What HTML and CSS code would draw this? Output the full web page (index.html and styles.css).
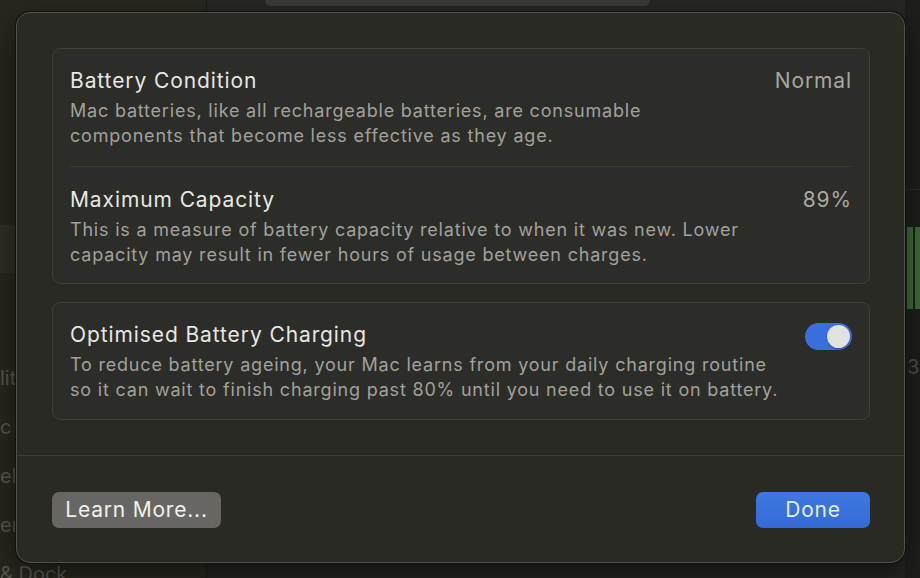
FILE: index.html
```html
<!DOCTYPE html>
<html lang="en">
<head>
<meta charset="utf-8">
<title>Battery Health</title>
<link rel="stylesheet" href="styles.css">
</head>
<body>
<div class="app">
  <aside class="sidebar">
    <div class="side-top"></div>
    <div class="side-sel"></div>
    <div class="side-list">
      <div class="side-item">lit</div>
      <div class="side-item">c</div>
      <div class="side-item">ell</div>
      <div class="side-item">er</div>
      <div class="side-item">&amp; Dock</div>
    </div>
  </aside>
  <main class="main">
    <div class="topbar"><div class="search"></div></div>
    <div class="pane"></div>
  </main>
  <div class="rightstrip">
    <div class="rs-line"></div>
    <div class="bars"><span class="bar"></span><span class="bar"></span></div>
    <div class="rs-num">3</div>
  </div>
</div>

<div class="dialog">
  <div class="content">
    <section class="card">
      <div class="row row1">
        <div class="row-text">
          <div class="title">Battery Condition</div>
          <div class="desc">Mac batteries, like all rechargeable batteries, are consumable<br>components that become less effective as they age.</div>
        </div>
        <div class="value">Normal</div>
      </div>
      <div class="divider"></div>
      <div class="row row2">
        <div class="row-text">
          <div class="title">Maximum Capacity</div>
          <div class="desc">This is a measure of battery capacity relative to when it was new. Lower<br>capacity may result in fewer hours of usage between charges.</div>
        </div>
        <div class="value">89%</div>
      </div>
    </section>
    <section class="card card2">
      <div class="row row3">
        <div class="row-text">
          <div class="title">Optimised Battery Charging</div>
          <div class="desc">To reduce battery ageing, your Mac learns from your daily charging routine<br>so it can wait to finish charging past 80% until you need to use it on battery.</div>
        </div>
        <div class="toggle"><span class="knob"></span></div>
      </div>
    </section>
  </div>
  <div class="footer">
    <button class="btn btn-secondary">Learn More...</button>
    <button class="btn btn-primary">Done</button>
  </div>
</div>
</body>
</html>
```
FILE: styles.css
```css
* { box-sizing: border-box; }
html, body {
  margin: 0;
  width: 920px;
  height: 578px;
  overflow: hidden;
  background: #1d1d1b;
  font-family: "Inter", "Noto Sans", "Liberation Sans", sans-serif;
}
.app {
  display: flex;
  width: 920px;
  height: 578px;
}
.sidebar {
  width: 207px;
  flex-shrink: 0;
  background: #28261e;
  display: flex;
  flex-direction: column;
  border-right: 1px solid #1a1a18;
  overflow: hidden;
}
.side-top { height: 225px; flex-shrink: 0; }
.side-sel { height: 48px; flex-shrink: 0; background: #302d24; }
.side-list {
  flex-shrink: 0;
  display: flex;
  flex-direction: column;
  padding-top: 107px;
}
.side-item {
  flex-shrink: 0;
  height: 49px;
  margin-top: -14px;
  margin-bottom: 14px;
  color: #57554e;
  font-size: 20px;
  line-height: 24px;
  white-space: nowrap;
}
.main {
  flex: 1;
  display: flex;
  flex-direction: column;
  background: #232320;
}
.topbar {
  height: 12px;
  padding-left: 58px;
  background: #262624;
}
.search {
  width: 385px;
  height: 6px;
  background: #3a3a37;
  border-radius: 0 0 6px 6px;
}
.pane { flex: 1; background: #242421; }
.rightstrip {
  width: 15px;
  flex-shrink: 0;
  background: #1e1e1c;
  display: flex;
  flex-direction: column;
}
.rs-line { height: 190px; border-bottom: 1px solid #2c2c2a; }
.bars {
  margin-top: 37px;
  height: 82px;
  display: flex;
  gap: 2px;
  padding-left: 2px;
}
.bar { width: 6px; background: #3d6a35; }
.rs-num {
  margin-top: 46px;
  color: #4e4e4a;
  font-size: 20px;
  line-height: 24px;
  padding-left: 2px;
}

/* dialog */
.dialog {
  position: absolute;
  left: 16px;
  top: 12px;
  width: 889px;
  height: 551px;
  background: #2a2a25;
  border: 1px solid #52524c;
  border-radius: 14px;
  box-shadow: 0 0 0 1px #111, 0 10px 30px rgba(0,0,0,0.5);
  display: flex;
  flex-direction: column;
}
.content {
  padding: 35px 34px 35px 35px;
  display: flex;
  flex-direction: column;
  gap: 18px;
  border-bottom: 1px solid #3e3e39;
}
.card {
  border: 1px solid #3f3f3a;
  border-radius: 8px;
  background: #2c2c28;
  padding: 0 17px;
}
.row {
  display: flex;
  justify-content: space-between;
  align-items: flex-start;
}
.row1 { padding: 19px 0 18px; }
.row2 { padding: 20px 0 16px; }
.row3 { padding: 19px 0 17px; }
.divider { height: 1px; background: #3c3c37; }
.title {
  color: #e7e7e3;
  font-size: 21px;
  line-height: 26px;
  letter-spacing: 0.9px;
}
.desc {
  margin-top: 4px;
  color: #a2a19c;
  font-size: 18px;
  line-height: 25px;
  letter-spacing: 0.8px;
}
.value {
  color: #a8a7a2;
  font-size: 21px;
  line-height: 26px;
  letter-spacing: 0.9px;
}
.toggle {
  margin-top: 1px;
  width: 47px;
  height: 27px;
  border-radius: 14px;
  background: #3b6fdf;
  display: flex;
  justify-content: flex-end;
  align-items: center;
  padding-right: 2px;
}
.knob {
  width: 23px;
  height: 23px;
  border-radius: 50%;
  background: #e2e2e0;
  box-shadow: 0 1px 2px rgba(0,0,0,0.3);
}
.footer {
  flex: 1;
  display: flex;
  justify-content: space-between;
  align-items: flex-start;
  padding: 36px 34px 0 35px;
}
.btn {
  height: 36px;
  border: none;
  border-radius: 7px;
  font-family: inherit;
  font-size: 21px;
  line-height: 36px;
  letter-spacing: 0.8px;
  padding: 0;
}
.btn-secondary {
  width: 169px;
  background: #676662;
  color: #f1f1ef;
}
.btn-primary {
  width: 114px;
  background: linear-gradient(#3d78e0, #356ad6);
  color: #e4ecfb;
}
```
